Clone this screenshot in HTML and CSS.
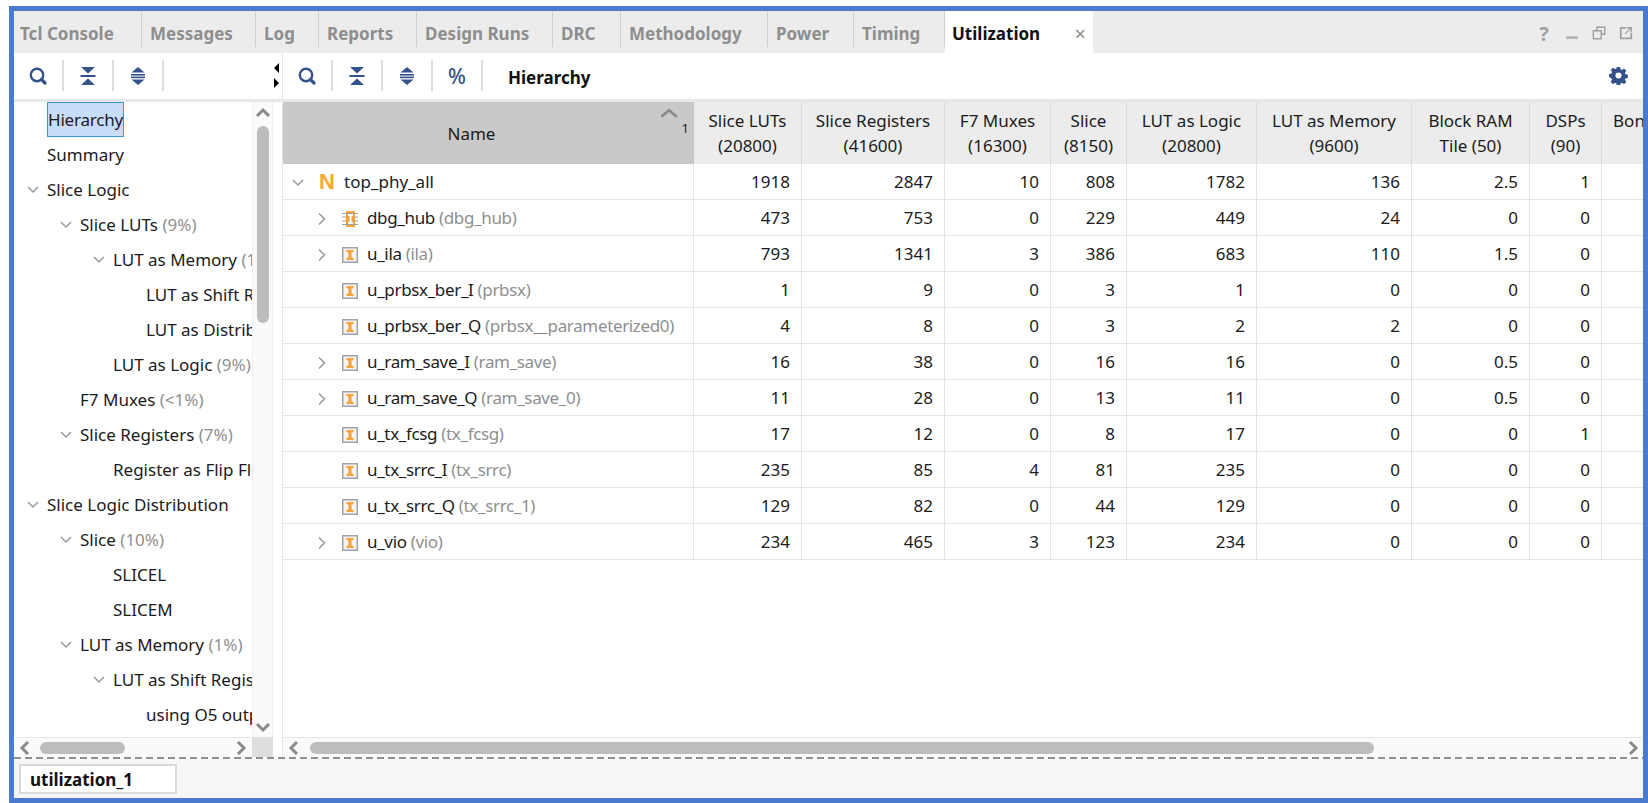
FILE: index.html
```html
<!DOCTYPE html>
<html lang="en">
<head>
<meta charset="utf-8">
<title>Utilization</title>
<link rel="stylesheet" href="styles.css">
</head>
<body>
<svg class="defs" width="0" height="0" aria-hidden="true">
  <symbol id="i-search" viewBox="0 0 20 20"><circle cx="9" cy="9" r="6.200" fill="none" stroke="#34528a" stroke-width="2.400"/><path d="M13.500 13.500l3.500 3.500" stroke="#34528a" stroke-width="3.200" stroke-linecap="round"/></symbol>
  <symbol id="i-collapse" viewBox="0 0 20 20"><path d="M3 1h14l-7 6.500zM3 19h14l-7-6.500z" fill="#34528a"/><rect x="2.500" y="9" width="15" height="2" fill="#34528a"/></symbol>
  <symbol id="i-expand" viewBox="0 0 20 20"><path d="M10 1l6.500 5.500H3.500zM10 19l-6.500-5.500h13z" fill="#34528a"/><rect x="3" y="8" width="14" height="1.600" fill="#34528a"/><rect x="3" y="10.600" width="14" height="1.600" fill="#34528a"/></symbol>
  <symbol id="i-down" viewBox="0 0 14 14"><path d="M2 4l5 5 5-5" fill="none" stroke="#9a9a9a" stroke-width="1.500"/></symbol>
  <symbol id="i-right" viewBox="0 0 14 14"><path d="M4 1.500l5.500 5.500L4 12.500" fill="none" stroke="#9a9a9a" stroke-width="1.500"/></symbol>
  <symbol id="i-inst" viewBox="0 0 16 16"><rect x=".75" y=".75" width="14.500" height="14.500" fill="#f4f4f4" stroke="#a3a3a3" stroke-width="1.500"/><path d="M4.500 3h7v2.200H9.500v5.600h2V13h-7v-2.200h2V5.200h-2z" fill="#f7a033"/></symbol>
  <symbol id="i-hub" viewBox="0 0 16 16"><rect x="4" y="0" width="9" height="16" fill="#f7a033"/><path d="M0 2.500h16M0 6h4M0 10h4M0 13.500h16M12 6h4M12 10h4" stroke="#a0a0a0" stroke-width="1"/><path d="M6 3h5v2H9.500v6H11v2H6v-2h1.500V5H6z" fill="#fff"/></symbol>
  <symbol id="s-up" viewBox="0 0 16 16"><path d="M2 11l6-6 6 6" fill="none" stroke="#8a8a8a" stroke-width="3"/></symbol>
  <symbol id="s-down" viewBox="0 0 16 16"><path d="M2 5l6 6 6-6" fill="none" stroke="#8a8a8a" stroke-width="3"/></symbol>
  <symbol id="s-left" viewBox="0 0 16 16"><path d="M11 2L5 8l6 6" fill="none" stroke="#8a8a8a" stroke-width="3"/></symbol>
  <symbol id="s-right" viewBox="0 0 16 16"><path d="M5 2l6 6-6 6" fill="none" stroke="#8a8a8a" stroke-width="3"/></symbol>
</svg>

<div class="window">
  <div class="tabbar">
    <div class="tab t1">Tcl Console</div>
    <div class="tab t2">Messages</div>
    <div class="tab t3">Log</div>
    <div class="tab t4">Reports</div>
    <div class="tab t5">Design Runs</div>
    <div class="tab t6">DRC</div>
    <div class="tab t7">Methodology</div>
    <div class="tab t8">Power</div>
    <div class="tab t9">Timing</div>
    <div class="tab active">Utilization<span class="close">×</span></div>
    <div class="winctl">
      <span class="help">?</span>
      <svg class="wc" viewBox="0 0 16 16"><rect x="1" y="12" width="14" height="2.500" fill="#a8a8a8"/></svg>
      <svg class="wc" viewBox="0 0 16 16"><path d="M5.500 5V1.500h9v8H11M1.500 5.500h9v9h-9z" fill="none" stroke="#a0a0a0" stroke-width="1.600"/></svg>
      <svg class="wc" viewBox="0 0 16 16"><path d="M8 2H2v12h12V8" fill="none" stroke="#a0a0a0" stroke-width="2"/><path d="M7 9l6-6M9 2h5v5" fill="none" stroke="#a0a0a0" stroke-width="1.600"/></svg>
    </div>
  </div>

  <div class="panes">
    <div class="pane left">
      <div class="toolbar">
        <svg class="tool"><use href="#i-search"/></svg><span class="sep"></span>
        <svg class="tool"><use href="#i-collapse"/></svg><span class="sep"></span>
        <svg class="tool"><use href="#i-expand"/></svg><span class="sep"></span>
        <svg class="sash" viewBox="0 0 8 32"><path d="M6 0v10L1 5zM1 15l5 5-5 5z" fill="#000"/></svg>
      </div>
      <div class="body">
        <div class="tree">
          <div class="node l0"><span class="sel">Hierarchy</span></div>
          <div class="node l0">Summary</div>
          <div class="node l0"><svg class="chev"><use href="#i-down"/></svg>Slice Logic</div>
          <div class="node l1"><svg class="chev"><use href="#i-down"/></svg>Slice LUTs <span class="dim">(9%)</span></div>
          <div class="node l2"><svg class="chev"><use href="#i-down"/></svg>LUT as Memory <span class="dim">(1%)</span></div>
          <div class="node l3">LUT as Shift Registers</div>
          <div class="node l3">LUT as Distributed RAM</div>
          <div class="node l2">LUT as Logic <span class="dim">(9%)</span></div>
          <div class="node l1">F7 Muxes <span class="dim">(&lt;1%)</span></div>
          <div class="node l1"><svg class="chev"><use href="#i-down"/></svg>Slice Registers <span class="dim">(7%)</span></div>
          <div class="node l2">Register as Flip Flop</div>
          <div class="node l0"><svg class="chev"><use href="#i-down"/></svg>Slice Logic Distribution</div>
          <div class="node l1"><svg class="chev"><use href="#i-down"/></svg>Slice <span class="dim">(10%)</span></div>
          <div class="node l2">SLICEL</div>
          <div class="node l2">SLICEM</div>
          <div class="node l1"><svg class="chev"><use href="#i-down"/></svg>LUT as Memory <span class="dim">(1%)</span></div>
          <div class="node l2"><svg class="chev"><use href="#i-down"/></svg>LUT as Shift Register</div>
          <div class="node l3">using O5 output</div>
        </div>
        <div class="vscroll">
          <svg class="arrow"><use href="#s-up"/></svg>
          <div class="vthumb"></div>
          <svg class="arrow"><use href="#s-down"/></svg>
        </div>
      </div>
      <div class="hrow">
        <div class="hscroll">
          <svg class="arrow"><use href="#s-left"/></svg>
          <div class="hthumb lthumb"></div>
          <svg class="arrow"><use href="#s-right"/></svg>
        </div>
        <div class="corner"></div>
      </div>
    </div>

    <div class="pane right">
      <div class="toolbar">
        <svg class="tool"><use href="#i-search"/></svg><span class="sep"></span>
        <svg class="tool"><use href="#i-collapse"/></svg><span class="sep"></span>
        <svg class="tool"><use href="#i-expand"/></svg><span class="sep"></span>
        <span class="pct">%</span><span class="sep"></span>
        <span class="tbtitle">Hierarchy</span>
        <svg class="gear" viewBox="0 0 20 20"><path fill="#34528a" fill-rule="evenodd" d="M8.300 1h3.400l.5 2.500 1.500.6 2.100-1.400 2.400 2.400-1.400 2.100.6 1.500 2.500.5v3.400l-2.500.5-.6 1.500 1.400 2.100-2.400 2.400-2.100-1.400-1.500.6-.5 2.500H8.300l-.5-2.500-1.500-.6-2.100 1.400-2.400-2.400 1.400-2.100-.6-1.500L.1 11.700V8.300l2.500-.5.6-1.500-1.400-2.100 2.400-2.400 2.100 1.400 1.500-.6zM10 6.800a3.200 3.200 0 1 0 0 6.400 3.200 3.200 0 0 0 0-6.400z"/></svg>
      </div>
      <div class="tablewrap">
        <table class="grid">
          <colgroup>
            <col class="c0"><col class="c1"><col class="c2"><col class="c3"><col class="c4"><col class="c5"><col class="c6"><col class="c7"><col class="c8"><col class="c9">
          </colgroup>
          <thead>
            <tr>
              <th class="name">Name<svg class="sortup" viewBox="0 0 16 10"><path d="M1 8l7-6 7 6" fill="none" stroke="#8a8a8a" stroke-width="2.400"/></svg><span class="sortnum">1</span></th>
              <th>Slice LUTs<br>(20800)</th>
              <th>Slice Registers<br>(41600)</th>
              <th>F7 Muxes<br>(16300)</th>
              <th>Slice<br>(8150)</th>
              <th>LUT as Logic<br>(20800)</th>
              <th>LUT as Memory<br>(9600)</th>
              <th>Block RAM<br>Tile (50)</th>
              <th>DSPs<br>(90)</th>
              <th>Bonded IOB<br>&nbsp;</th>
            </tr>
          </thead>
          <tbody>
            <tr><td class="cell-name r0"><svg class="chev2"><use href="#i-down"/></svg><span class="n-icon">N</span>top_phy_all</td><td>1918</td><td>2847</td><td>10</td><td>808</td><td>1782</td><td>136</td><td>2.5</td><td>1</td><td></td></tr>
            <tr><td class="cell-name"><svg class="chev2"><use href="#i-right"/></svg><svg class="inst"><use href="#i-hub"/></svg>dbg_hub <span class="dim">(dbg_hub)</span></td><td>473</td><td>753</td><td>0</td><td>229</td><td>449</td><td>24</td><td>0</td><td>0</td><td></td></tr>
            <tr><td class="cell-name"><svg class="chev2"><use href="#i-right"/></svg><svg class="inst"><use href="#i-inst"/></svg>u_ila <span class="dim">(ila)</span></td><td>793</td><td>1341</td><td>3</td><td>386</td><td>683</td><td>110</td><td>1.5</td><td>0</td><td></td></tr>
            <tr><td class="cell-name"><span class="chev2"></span><svg class="inst"><use href="#i-inst"/></svg>u_prbsx_ber_I <span class="dim">(prbsx)</span></td><td>1</td><td>9</td><td>0</td><td>3</td><td>1</td><td>0</td><td>0</td><td>0</td><td></td></tr>
            <tr><td class="cell-name"><span class="chev2"></span><svg class="inst"><use href="#i-inst"/></svg>u_prbsx_ber_Q <span class="dim">(prbsx__parameterized0)</span></td><td>4</td><td>8</td><td>0</td><td>3</td><td>2</td><td>2</td><td>0</td><td>0</td><td></td></tr>
            <tr><td class="cell-name"><svg class="chev2"><use href="#i-right"/></svg><svg class="inst"><use href="#i-inst"/></svg>u_ram_save_I <span class="dim">(ram_save)</span></td><td>16</td><td>38</td><td>0</td><td>16</td><td>16</td><td>0</td><td>0.5</td><td>0</td><td></td></tr>
            <tr><td class="cell-name"><svg class="chev2"><use href="#i-right"/></svg><svg class="inst"><use href="#i-inst"/></svg>u_ram_save_Q <span class="dim">(ram_save_0)</span></td><td>11</td><td>28</td><td>0</td><td>13</td><td>11</td><td>0</td><td>0.5</td><td>0</td><td></td></tr>
            <tr><td class="cell-name"><span class="chev2"></span><svg class="inst"><use href="#i-inst"/></svg>u_tx_fcsg <span class="dim">(tx_fcsg)</span></td><td>17</td><td>12</td><td>0</td><td>8</td><td>17</td><td>0</td><td>0</td><td>1</td><td></td></tr>
            <tr><td class="cell-name"><span class="chev2"></span><svg class="inst"><use href="#i-inst"/></svg>u_tx_srrc_I <span class="dim">(tx_srrc)</span></td><td>235</td><td>85</td><td>4</td><td>81</td><td>235</td><td>0</td><td>0</td><td>0</td><td></td></tr>
            <tr><td class="cell-name"><span class="chev2"></span><svg class="inst"><use href="#i-inst"/></svg>u_tx_srrc_Q <span class="dim">(tx_srrc_1)</span></td><td>129</td><td>82</td><td>0</td><td>44</td><td>129</td><td>0</td><td>0</td><td>0</td><td></td></tr>
            <tr><td class="cell-name"><svg class="chev2"><use href="#i-right"/></svg><svg class="inst"><use href="#i-inst"/></svg>u_vio <span class="dim">(vio)</span></td><td>234</td><td>465</td><td>3</td><td>123</td><td>234</td><td>0</td><td>0</td><td>0</td><td></td></tr>
          </tbody>
        </table>
      </div>
      <div class="hscroll rightscroll">
        <svg class="arrow"><use href="#s-left"/></svg>
        <div class="hthumb rthumb"></div>
        <svg class="arrow"><use href="#s-right"/></svg>
      </div>
    </div>
  </div>

  <div class="dash"></div>
  <div class="footer"><div class="foot-tab">utilization_1</div></div>
</div>
</body>
</html>
```

FILE: styles.css
```css
* { box-sizing: border-box; }
html, body { margin: 0; height: 100%; background: #fff; overflow: hidden; }
body {
  padding: 6px 0 0 9px;
  font-family: "Noto Sans", "Open Sans", sans-serif;
  font-size: 17px;
  color: #1b1b1b;
}
.defs { position: absolute; }

.window {
  width: 1639px;
  height: 797px;
  border: 5px solid #4a7bcf;
  display: flex;
  flex-direction: column;
  background: #fff;
}

/* Tab bar */
.tabbar {
  height: 42px;
  flex: none;
  display: flex;
  background: #ececec;
}
.tab {
  height: 36px;
  padding: 8px 0 0 8px;
  display: flex;
  align-items: center;
  border-right: 1.5px solid #cfcfcf;
  color: #8e8e8e;
  font-weight: 700;
  white-space: nowrap;
}
.t1 { width: 128px; padding-left: 6px; }
.t2 { width: 114px; }
.t3 { width: 63px; }
.t4 { width: 98px; }
.t5 { width: 136px; }
.t6 { width: 68px; }
.t7 { width: 147px; }
.t8 { width: 86px; }
.t9 { width: 91px; }
.tab.active {
  height: 42px;
  width: 148px;
  background: #fff;
  color: #111;
  border-right: 0;
  padding: 2px 0 0 7px;
}
.close { margin-left: auto; margin-right: 7px; color: #8e8e8e; font-weight: 400; font-size: 20px; }
.winctl {
  margin-left: auto;
  height: 42px;
  display: flex;
  align-items: center;
  padding: 2px 10px 0 0;
  gap: 13px;
}
.help { color: #a0a0a0; font-weight: 700; font-size: 20px; width: 14px; text-align: center; margin-right: 1px; }
.wc { width: 14px; height: 14px; }

/* Panes */
.panes { flex: 1; min-height: 0; display: flex; }
.pane { display: flex; flex-direction: column; min-width: 0; }
.pane.left { width: 268px; flex: none; }
.pane.right { flex: 1; border-left: 1px solid #e6e6e6; }

.toolbar {
  height: 49px;
  flex: none;
  display: flex;
  align-items: flex-start;
  padding: 7px 0 0 0;
  border-bottom: 3px solid #e8e8e8;
}
.tool { width: 20px; height: 20px; margin: 6px 0 0 14px; flex: none; }
.sep { width: 2px; height: 31px; background: #dcdcdc; margin-left: 14px; flex: none; }
.toolbar .sep + .tool { margin-left: 14px; }
.sash { width: 8px; height: 32px; margin: 3px 1px 0 auto; }
.pct { color: #34528a; font-size: 21px; font-weight: 500; width: 20px; margin-left: 14px; text-align: center; line-height: 32px; }
.tbtitle { margin-left: 25px; font-weight: 700; color: #111; line-height: 36px; }
.gear { width: 19px; height: 19px; margin: 6px 15px 0 auto; }

/* Tree */
.body { flex: 1; min-height: 0; display: flex; }
.tree { width: 238px; flex: none; overflow: hidden; }
.node {
  height: 35px;
  display: flex;
  align-items: center;
  white-space: pre;
}
.l0 { padding-left: 33px; }
.l1 { padding-left: 66px; }
.l2 { padding-left: 99px; }
.l3 { padding-left: 132px; }
.chev { width: 14px; height: 14px; margin-left: -21px; margin-right: 7px; flex: none; }
.dim { color: #8f8f8f; }
.sel {
  width: 77px;
  height: 35px;
  line-height: 33px;
  background: #c8dcfb;
  border: 1px solid #3f95d8;
  letter-spacing: -.2px;
  overflow: hidden;
}

.vscroll {
  width: 21px;
  flex: none;
  background: #fafafa;
  border-left: 1px solid #eee;
  border-right: 1px solid #eee;
  display: flex;
  flex-direction: column;
  align-items: center;
  padding-top: 3px;
}
.arrow { width: 16px; height: 16px; flex: none; }
.vthumb { width: 12px; height: 197px; margin-top: 5px; background: #bdbdbd; border-radius: 6px; }
.vscroll .arrow:last-child { margin-top: auto; margin-bottom: 2px; }

.hrow { height: 20px; flex: none; display: flex; }
.hscroll {
  flex: 1;
  height: 20px;
  background: #fafafa;
  border-top: 1px solid #e6e6e6;
  display: flex;
  align-items: center;
  padding: 0 3px 0 3px;
}
.corner { width: 21px; margin-right: 9px; background: #dedede; flex: none; }
.hthumb { height: 12px; background: #bdbdbd; border-radius: 6px; }
.lthumb { width: 85px; margin-left: 7px; margin-right: auto; }
.rthumb { width: 1064px; margin-left: 8px; margin-right: auto; }
.rightscroll { flex: none; padding: 0 2px 0 3px; }

/* Table */
.tablewrap { flex: 1; min-height: 0; overflow: hidden; }
.grid { width: 1439px; table-layout: fixed; border-collapse: separate; border-spacing: 0; }
.c0 { width: 411px; } .c1 { width: 108px; } .c2 { width: 143px; } .c3 { width: 106px; }
.c4 { width: 76px; } .c5 { width: 130px; } .c6 { width: 155px; } .c7 { width: 118px; }
.c8 { width: 72px; } .c9 { width: 120px; }
th {
  height: 62px;
  padding: 0;
  background: #ececec;
  font-weight: 400;
  line-height: 25px;
  text-align: center;
  border-right: 1px solid #dcdcdc;
  white-space: nowrap;
  color: #1b1b1b;
}
th.name { background: #c9c9c9; position: relative; padding-right: 34px; border-right: 0; }
.sortup { position: absolute; right: 16px; top: 6px; width: 18px; height: 11px; }
.sortnum { position: absolute; right: 5px; top: 18px; font-size: 13px; line-height: 16px; }
td {
  height: 36px;
  padding: 0 11px 0 0;
  text-align: right;
  border-right: 1px solid #e4e4e4;
  border-bottom: 1px solid #e4e4e4;
  white-space: nowrap;
}
td.cell-name { text-align: left; padding: 0; letter-spacing: -.35px; }
td.r0 { letter-spacing: 0; }
.cell-name { white-space: pre; }
.chev2 { display: inline-block; width: 14px; height: 14px; vertical-align: -2px; margin-left: 32px; margin-right: 13px; }
.r0 .chev2 { margin-left: 8px; margin-right: 14px; }
.inst { width: 16px; height: 16px; vertical-align: -3px; margin-right: 9px; }
.n-icon { display: inline-block; width: 17px; margin-right: 8px; color: #f7a933; font-family: "Liberation Sans", sans-serif; font-weight: 700; font-size: 22px; line-height: 20px; vertical-align: -1px; }

/* Footer */
.dash {
  height: 2px;
  flex: none;
  background: repeating-linear-gradient(90deg, #8f8f8f 0 7px, transparent 7px 11px);
}
.footer { height: 39px; flex: none; background: #f6f6f6; padding: 5px 0 0 5px; }
.foot-tab {
  width: 158px;
  height: 30px;
  background: #fff;
  border: 2px solid #d9d9d9;
  font-weight: 700;
  color: #111;
  line-height: 27px;
  padding-left: 9px;
}
```
